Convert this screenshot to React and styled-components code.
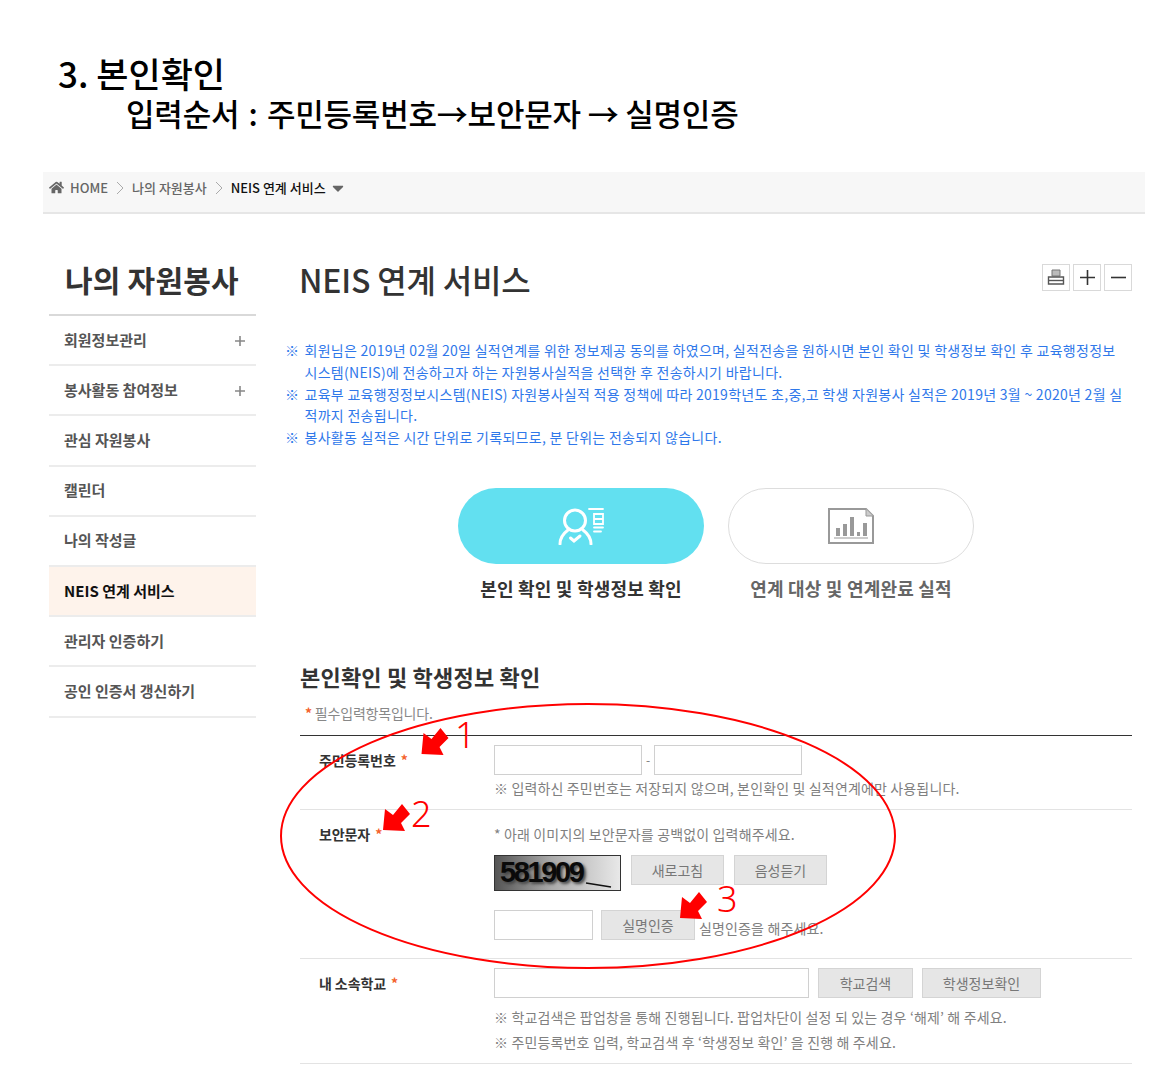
import React from 'react';
import styled, { createGlobalStyle } from 'styled-components';
import { FaHome, FaCaretDown } from 'react-icons/fa';

const KR = `"Noto Sans CJK KR", "Noto Sans", sans-serif`;

const GlobalStyle = createGlobalStyle`
  html, body { margin: 0; padding: 0; background: #fff; }
  body { font-family: ${KR}; color: #333; }
  * { box-sizing: border-box; }
`;

const Page = styled.div`
  position: relative;
  width: 1169px;
  height: 1070px;
  overflow: hidden;
`;

const Heading = styled.header`
  height: 172px;
  padding: 53px 0 0 58px;
  color: #000;
`;

const HeadingOne = styled.div`
  font-size: 35px;
  line-height: 40px;
  font-weight: 500;
`;

const HeadingTwo = styled.div`
  font-size: 31px;
  line-height: 40px;
  font-weight: 500;
  padding-left: 68px;
  letter-spacing: -0.2px;
`;

const Colon = styled.span`
  margin: 0 2.5px;
`;

const Crumbs = styled.nav`
  margin-left: 43px;
  width: 1102px;
  height: 42px;
  background: #f7f7f7;
  border-bottom: 2px solid #e6e6e6;
  display: flex;
  align-items: center;
  padding: 0 0 9px 6px;
  font-size: 13px;
  font-weight: 500;
  color: #666;
  letter-spacing: 0;
`;

const Crumb = styled.span`
  color: ${p => (p.$current ? '#111' : '#666')};
  margin-left: ${p => p.$gap || 0}px;
`;

const Chevron = styled.svg`
  width: 8px;
  height: 14px;
  margin: 0 8px;
`;

const Body = styled.div`
  display: flex;
  padding-left: 49px;
`;

const Side = styled.aside`
  width: 207px;
  flex: none;
  margin-right: 44px;
`;

const SideTitle = styled.h2`
  margin: 0;
  height: 102px;
  padding: 45px 0 0 16px;
  font-size: 30px;
  line-height: 40px;
  font-weight: 700;
  color: #333;
  letter-spacing: 0.2px;
  border-bottom: 2px solid #d9d9d9;
`;

const SideItem = styled.div`
  height: 50.2px;
  display: flex;
  align-items: center;
  justify-content: space-between;
  padding: 0 11px 2px 15px;
  font-size: 15px;
  font-weight: 700;
  color: ${p => (p.$active ? '#111' : '#555')};
  background: ${p => (p.$active ? '#fef3eb' : 'transparent')};
  border-bottom: 2px solid #ececec;
`;

const PlusIcon = styled.svg`
  width: 10px;
  height: 10px;
  margin-top: 4px;
`;

const Main = styled.main`
  width: 832px;
  flex: none;
`;

const TitleRow = styled.div`
  display: flex;
  justify-content: space-between;
  height: 104px;
  padding-top: 43px;
`;

const PageTitle = styled.h1`
  margin: 0 0 0 -1px;
  font-size: 32px;
  line-height: 44px;
  font-weight: 500;
  color: #333;
  letter-spacing: -0.2px;
`;

const Tools = styled.div`
  display: flex;
  gap: 3px;
  padding-top: 7px;
`;

const ToolBtn = styled.div`
  width: 28px;
  height: 27px;
  border: 1px solid #d9d9d9;
  display: flex;
  align-items: center;
  justify-content: center;
`;

const Notices = styled.ul`
  list-style: none;
  margin: 0 0 0 -15px;
  padding: 22px 0 0;
  width: 847px;
  height: 170px;
  font-size: 14px;
  line-height: 21.75px;
  color: #2f78ea;
`;

const Notice = styled.li`
  position: relative;
  padding-left: 19.5px;
  letter-spacing: 0.28px;
  white-space: nowrap;
`;

const NoticeMark = styled.span`
  position: absolute;
  left: 0;
  top: 0;
`;

const Steps = styled.div`
  display: flex;
  gap: 24px;
  margin-left: 158px;
`;

const Step = styled.div`
  width: 246px;
  text-align: center;
`;

const Pill = styled.div`
  height: 76px;
  border-radius: 38px;
  display: flex;
  align-items: center;
  justify-content: center;
  background: ${p => (p.$on ? '#62e0f0' : '#fff')};
  border: ${p => (p.$on ? 'none' : '1px solid #ddd')};
`;

const StepLabel = styled.div`
  margin-top: 10px;
  font-size: 18px;
  line-height: 28px;
  font-weight: 700;
  letter-spacing: 0.2px;
  color: ${p => (p.$on ? '#333' : '#666')};
`;

const SectionTitle = styled.h3`
  margin: 59px 0 0;
  font-size: 22px;
  line-height: 30px;
  font-weight: 700;
  color: #333;
  letter-spacing: 0.2px;
`;

const Required = styled.div`
  margin-top: 11px;
  height: 33px;
  padding-left: 5px;
  font-size: 14px;
  line-height: 22px;
  color: #888;
  letter-spacing: -0.2px;
`;

const Star = styled.span`
  color: #f4622c;
  font-weight: 700;
  margin-left: ${p => p.$ml || 0}px;
`;

const Row = styled.div`
  display: flex;
  height: ${p => p.$h}px;
  border-top: ${p => (p.$first ? '1px solid #333' : '1px solid #e3e3e3')};
`;

const RowLabel = styled.div`
  width: 194px;
  flex: none;
  padding: ${p => p.$top || 13}px 0 0 19px;
  font-size: 14px;
  line-height: 22px;
  font-weight: 700;
  color: #333;
  letter-spacing: -0.1px;
`;

const RowBody = styled.div`
  padding-top: ${p => p.$top || 0}px;
  flex: 1;
`;

const Line = styled.div`
  display: flex;
  align-items: flex-start;
  margin-top: ${p => p.$mt || 0}px;
`;

const Field = styled.div`
  width: ${p => p.$w}px;
  height: 30px;
  background: #fff;
  border: 1px solid #d0d0d0;
  flex: none;
`;

const Dash = styled.span`
  width: 12px;
  height: 30px;
  line-height: 30px;
  text-align: center;
  font-size: 12px;
  color: #777;
`;

const GreyBtn = styled.div`
  width: ${p => p.$w}px;
  height: 30px;
  margin-left: ${p => p.$ml || 0}px;
  background: #e6e6e6;
  border: 1px solid #d4d4d4;
  color: #777;
  font-size: 14px;
  line-height: 28px;
  text-align: center;
  flex: none;
`;

const Help = styled.div`
  margin-top: ${p => p.$mt || 0}px;
  margin-left: ${p => p.$ml || 0}px;
  margin-right: -20px;
  font-size: 14px;
  line-height: 22px;
  color: #808080;
  letter-spacing: 0.15px;
  white-space: nowrap;
`;

const Captcha = styled.div`
  width: 127px;
  height: 36px;
  border: 1px solid #333;
  background: linear-gradient(90deg, #555 0%, #aaa 45%, #e8e8e8 100%);
  position: relative;
  overflow: hidden;
  flex: none;
  padding-left: 5px;
  font-family: "Liberation Sans", sans-serif;
  font-size: 29px;
  line-height: 33px;
  font-weight: 700;
  color: #0a0a0a;
  letter-spacing: -2.4px;
  text-shadow: 2px 2px 3px #444;
`;

const CaptchaLine = styled.svg`
  position: absolute;
  left: 0;
  top: 0;
  width: 127px;
  height: 36px;
`;

// 빨간 표시는 캡처 위에 덧그린 주석이라 절대 위치로 둔다
const Overlay = styled.svg`
  position: absolute;
  left: 0;
  top: 0;
  pointer-events: none;
`;

const Mark = styled.span`
  position: absolute;
  left: ${p => p.$x}px;
  top: ${p => p.$y}px;
  font-family: "Noto Sans", sans-serif;
  font-size: 36px;
  line-height: 28px;
  font-weight: 300;
  color: #f00;
`;

const menu = ['회원정보관리', '봉사활동 참여정보', '관심 자원봉사', '캘린더', '나의 작성글', 'NEIS 연계 서비스', '관리자 인증하기', '공인 인증서 갱신하기'];

const Arrow = ({ x, y }) => (
  <polygon transform={`translate(${x} ${y})`} points="0,26 2,5 10,11 19,0 27,10 18,19 22,27" fill="#f00" />
);

const Plus = () => (
  <PlusIcon viewBox="0 0 10 10"><path d="M0 5h10M5 0v10" stroke="#888" strokeWidth="1.6" /></PlusIcon>
);

export default function App() {
  return (
    <Page>
      <GlobalStyle />
      <Heading>
        <HeadingOne>3. 본인확인</HeadingOne>
        <HeadingTwo>입력순서 <Colon>:</Colon> 주민등록번호→보안문자 → 실명인증</HeadingTwo>
      </Heading>

      <Crumbs>
        <FaHome size={15} color="#666" />
        <Crumb $gap={6}>HOME</Crumb>
        <Chevron viewBox="0 0 8 14"><path d="M1 1l6 6-6 6" fill="none" stroke="#aaa" /></Chevron>
        <Crumb>나의 자원봉사</Crumb>
        <Chevron viewBox="0 0 8 14"><path d="M1 1l6 6-6 6" fill="none" stroke="#aaa" /></Chevron>
        <Crumb $current>NEIS 연계 서비스</Crumb>
        <FaCaretDown size={18} color="#666" style={{ marginLeft: 3 }} />
      </Crumbs>

      <Body>
        <Side>
          <SideTitle>나의 자원봉사</SideTitle>
          {menu.map((m, i) => (
            <SideItem key={m} $active={i === 5}>
              {m}
              {i < 2 && <Plus />}
            </SideItem>
          ))}
        </Side>

        <Main>
          <TitleRow>
            <PageTitle>NEIS 연계 서비스</PageTitle>
            <Tools>
              <ToolBtn>
                <svg width="18" height="18" viewBox="0 0 18 18">
                  <path d="M5 1h8v6H5z" fill="#bbb" stroke="#777" />
                  <path d="M1.5 8h15v7h-15z" fill="#fff" stroke="#555" strokeWidth="1.4" />
                  <path d="M2 11.5h14" stroke="#555" strokeWidth="1.4" />
                </svg>
              </ToolBtn>
              <ToolBtn>
                <svg width="15" height="15" viewBox="0 0 15 15"><path d="M0 7.5h15M7.5 0v15" stroke="#333" strokeWidth="1.6" /></svg>
              </ToolBtn>
              <ToolBtn>
                <svg width="15" height="15" viewBox="0 0 15 15"><path d="M0 7.5h15" stroke="#333" strokeWidth="1.6" /></svg>
              </ToolBtn>
            </Tools>
          </TitleRow>

          <Notices>
            <Notice><NoticeMark>※</NoticeMark>회원님은 2019년 02월 20일 실적연계를 위한 정보제공 동의를 하였으며, 실적전송을 원하시면 본인 확인 및 학생정보 확인 후 교육행정정보<br />시스템(NEIS)에 전송하고자 하는 자원봉사실적을 선택한 후 전송하시기 바랍니다.</Notice>
            <Notice><NoticeMark>※</NoticeMark>교육부 교육행정정보시스템(NEIS) 자원봉사실적 적용 정책에 따라 2019학년도 초,중,고 학생 자원봉사 실적은 2019년 3월 ~ 2020년 2월 실<br />적까지 전송됩니다.</Notice>
            <Notice><NoticeMark>※</NoticeMark>봉사활동 실적은 시간 단위로 기록되므로, 분 단위는 전송되지 않습니다.</Notice>
          </Notices>

          <Steps>
            <Step>
              <Pill $on>
                <svg width="46" height="38" viewBox="0 0 46 38" fill="none" stroke="#fff" strokeWidth="3" strokeLinecap="round">
                  <circle cx="17" cy="13.5" r="10.5" />
                  <path d="M2 37c0-7 4-11 8-14M33 37c0-7-4-11-8-14" />
                  <path d="M12.5 31l3.5 3 6-5" />
                  <path d="M31 2h14M36 7h9v10h-9zM36 12h9M36 20.5h9M36 24.5h7" strokeWidth="1.8" />
                </svg>
              </Pill>
              <StepLabel $on>본인 확인 및 학생정보 확인</StepLabel>
            </Step>
            <Step>
              <Pill>
                <svg width="46" height="36" viewBox="0 0 46 36">
                  <path d="M1 1h37l7 7v27H1z" fill="none" stroke="#999" strokeWidth="2" />
                  <path d="M38 1v7h7" fill="#ccc" stroke="#999" />
                  <path d="M8 20h4v8H8zM15 16h4v12h-4zM22 9h4v19h-4zM29 24h3v4h-3zM35 15h4v13h-4z" fill="#999" />
                  <path d="M6 30h34" stroke="#999" />
                </svg>
              </Pill>
              <StepLabel>연계 대상 및 연계완료 실적</StepLabel>
            </Step>
          </Steps>

          <SectionTitle>본인확인 및 학생정보 확인</SectionTitle>
          <Required><Star>*</Star> 필수입력항목입니다.</Required>

          <Row $first $h={74}>
            <RowLabel>주민등록번호 <Star $ml={2}>*</Star></RowLabel>
            <RowBody $top={9}>
              <Line>
                <Field $w={148} /><Dash>-</Dash><Field $w={148} />
              </Line>
              <Help $mt={2}>※ 입력하신 주민번호는 저장되지 않으며, 본인확인 및 실적연계에만 사용됩니다.</Help>
            </RowBody>
          </Row>

          <Row $h={149}>
            <RowLabel $top={13}>보안문자 <Star $ml={2}>*</Star></RowLabel>
            <RowBody $top={13}>
              <Help>* 아래 이미지의 보안문자를 공백없이 입력해주세요.</Help>
              <Line $mt={10}>
                <Captcha>
                  581909
                  <CaptchaLine viewBox="0 0 127 36"><path d="M91 27l25 4" stroke="#111" strokeWidth="1.5" /></CaptchaLine>
                </Captcha>
                <GreyBtn $w={93} $ml={10}>새로고침</GreyBtn>
                <GreyBtn $w={93} $ml={10}>음성듣기</GreyBtn>
              </Line>
              <Line $mt={19}>
                <Field $w={99} />
                <GreyBtn $w={94} $ml={8}>실명인증</GreyBtn>
                <Help $ml={4} $mt={7}>실명인증을 해주세요.</Help>
              </Line>
            </RowBody>
          </Row>

          <Row $h={105}>
            <RowLabel $top={13}>내 소속학교 <Star $ml={2}>*</Star></RowLabel>
            <RowBody $top={9}>
              <Line>
                <Field $w={315} />
                <GreyBtn $w={95} $ml={9}>학교검색</GreyBtn>
                <GreyBtn $w={119} $ml={9}>학생정보확인</GreyBtn>
              </Line>
              <Help $mt={8}>※ 학교검색은 팝업창을 통해 진행됩니다. 팝업차단이 설정 되 있는 경우 ‘해제’ 해 주세요.</Help>
              <Help $mt={3}>※ 주민등록번호 입력, 학교검색 후 ‘학생정보 확인’ 을 진행 해 주세요.</Help>
            </RowBody>
          </Row>
          <Row $h={1} />
        </Main>
      </Body>

      <Overlay width="1169" height="1070" viewBox="0 0 1169 1070">
        <ellipse cx="588" cy="836" rx="307" ry="132" fill="none" stroke="#f00" strokeWidth="2" />
        <Arrow x={421.5} y={728} />
        <Arrow x={383} y={804} />
        <Arrow x={680} y={892} />
      </Overlay>
      <Mark $x={455} $y={721}>1</Mark>
      <Mark $x={411} $y={800}>2</Mark>
      <Mark $x={717} $y={885}>3</Mark>
    </Page>
  );
}
